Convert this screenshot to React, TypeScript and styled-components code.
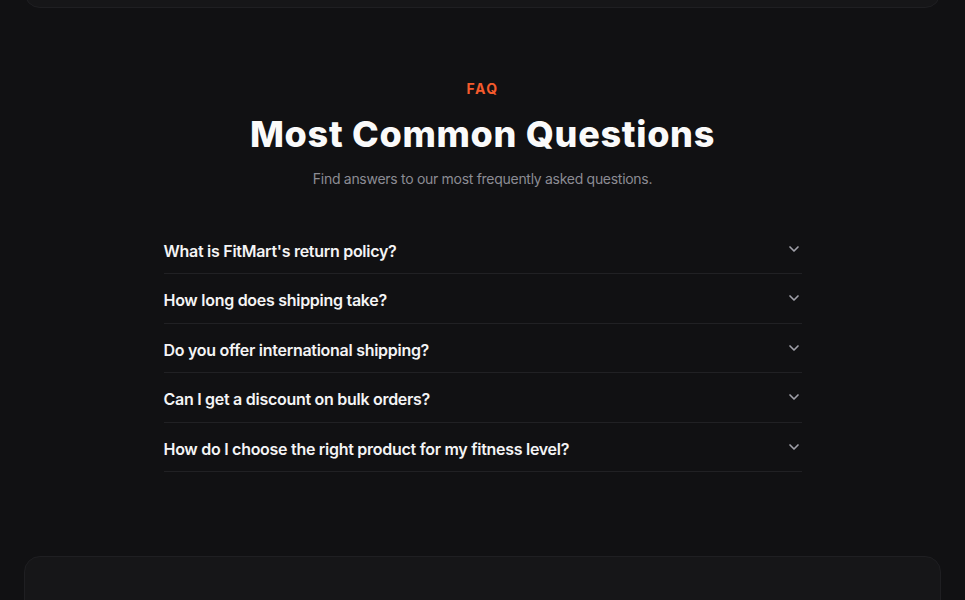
import React from "react";
import styled, { createGlobalStyle } from "styled-components";

const Global = createGlobalStyle`
  * { box-sizing: border-box; }
  html, body { margin: 0; padding: 0; background: #111113; }
  body { font-family: Inter, "Noto Sans", sans-serif; color: #fafafa; -webkit-font-smoothing: antialiased; }
`;

const Page = styled.div`
  padding: 0 24px;
  overflow: hidden;
  height: 600px;
`;

const Card = styled.div<{ $top?: boolean }>`
  background: #161618;
  border: 1px solid #1f1f22;
  border-radius: 16px;
  height: 240px;
  margin-top: ${(p) => (p.$top ? "-232px" : "0")};
`;

const Section = styled.section`
  padding: 71px 0 84px;
  display: flex;
  flex-direction: column;
  align-items: center;
`;

const Eyebrow = styled.div`
  font-size: 14px;
  line-height: 20px;
  font-weight: 700;
  color: #f45a2c;
  letter-spacing: 0.1em;
`;

const Title = styled.h2`
  margin: 15px 0 0;
  font-size: 36px;
  line-height: 40px;
  font-weight: 800;
  color: #fafafa;
  letter-spacing: 0.7px;
`;

const Subtitle = styled.p`
  margin: 15px 0 0;
  font-size: 14px;
  line-height: 20px;
  color: #8c8c94;
  letter-spacing: -0.29px;
`;

const List = styled.div`
  margin-top: 35.5px;
  width: 638px;
  display: flex;
  flex-direction: column;
`;

const Item = styled.div`
  border-bottom: 1px solid #212124;
`;

const Question = styled.button`
  width: 100%;
  display: flex;
  justify-content: space-between;
  align-items: flex-start;
  padding: 14px 0 10.5px;
  background: none;
  border: 0;
  cursor: pointer;
  text-align: left;
  font-family: inherit;
  font-size: 16px;
  line-height: 24px;
  font-weight: 600;
  letter-spacing: -0.28px;
  color: #f4f4f5;
`;

const Chevron = styled.svg`
  width: 16px;
  height: 16px;
  margin-top: 2px;
  flex-shrink: 0;
  color: #a1a1aa;
`;

const questions = [
  "What is FitMart's return policy?",
  "How long does shipping take?",
  "Do you offer international shipping?",
  "Can I get a discount on bulk orders?",
  "How do I choose the right product for my fitness level?",
];

export default function App() {
  return (
    <>
      <Global />
      <Page>
        <Card $top />
        <Section>
          <Eyebrow>FAQ</Eyebrow>
          <Title>Most Common Questions</Title>
          <Subtitle>Find answers to our most frequently asked questions.</Subtitle>
          <List>
            {questions.map((q) => (
              <Item key={q}>
                <Question>
                  <span>{q}</span>
                  <Chevron viewBox="0 0 24 24" fill="none" stroke="currentColor" strokeWidth={2.5} strokeLinecap="round" strokeLinejoin="round">
                    <path d="m6 9 6 6 6-6" />
                  </Chevron>
                </Question>
              </Item>
            ))}
          </List>
        </Section>
        <Card />
      </Page>
    </>
  );
}
